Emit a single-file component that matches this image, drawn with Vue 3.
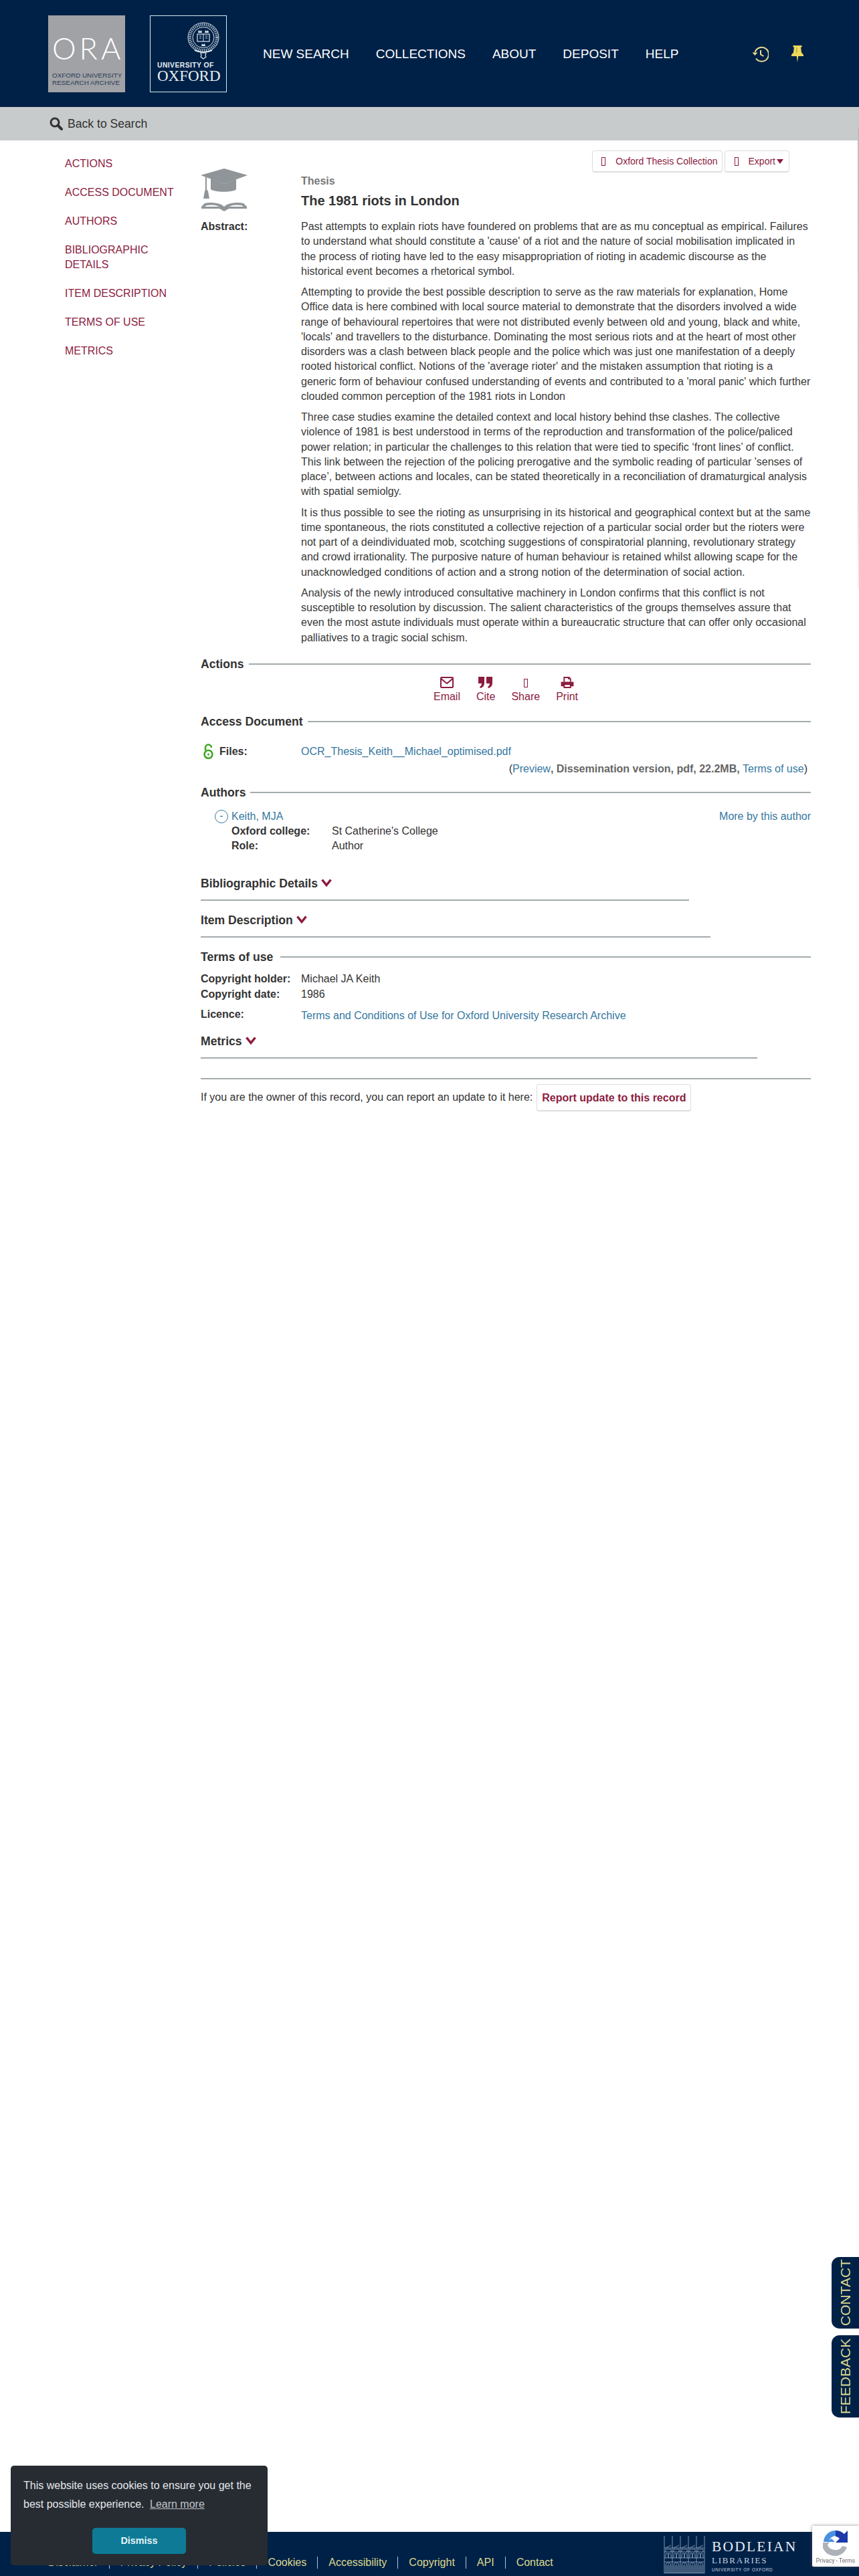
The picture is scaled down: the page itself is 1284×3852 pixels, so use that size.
<script setup>
const topLinks = ["NEW SEARCH", "COLLECTIONS", "ABOUT", "DEPOSIT", "HELP"];
const sideLinks = ["ACTIONS", "ACCESS DOCUMENT", "AUTHORS", "BIBLIOGRAPHIC DETAILS", "ITEM DESCRIPTION", "TERMS OF USE", "METRICS"];
const footerLinks = ["Disclaimer", "Privacy Policy", "Policies", "Cookies", "Accessibility", "Copyright", "API", "Contact"];

const paragraphs = [
  "Past attempts to explain riots have foundered on problems that are as mu conceptual as empirical. Failures to understand what should constitute a 'cause' of a riot and the nature of social mobilisation implicated in the process of rioting have led to the easy misappropriation of rioting in academic discourse as the historical event becomes a rhetorical symbol.",
  "Attempting to provide the best possible description to serve as the raw materials for explanation, Home Office data is here combined with local source material to demonstrate that the disorders involved a wide range of behavioural repertoires that were not distributed evenly between old and young, black and white, 'locals' and travellers to the disturbance. Dominating the most serious riots and at the heart of most other disorders was a clash between black people and the police which was just one manifestation of a deeply rooted historical conflict. Notions of the 'average rioter' and the mistaken assumption that rioting is a generic form of behaviour confused understanding of events and contributed to a 'moral panic' which further clouded common perception of the 1981 riots in London",
  "Three case studies examine the detailed context and local history behind thse clashes. The collective violence of 1981 is best understood in terms of the reproduction and transformation of the police/paliced power relation; in particular the challenges to this relation that were tied to specific ‘front lines’ of conflict. This link between the rejection of the policing prerogative and the symbolic reading of particular 'senses of place’, between actions and locales, can be stated theoretically in a reconciliation of dramaturgical analysis with spatial semiolgy.",
  "It is thus possible to see the rioting as unsurprising in its historical and geographical context but at the same time spontaneous, the riots constituted a collective rejection of a particular social order but the rioters were not part of a deindividuated mob, scotching suggestions of conspiratorial planning, revolutionary strategy and crowd irrationality. The purposive nature of human behaviour is retained whilst allowing scape for the unacknowledged conditions of action and a strong notion of the determination of social action.",
  "Analysis of the newly introduced consultative machinery in London confirms that this conflict is not susceptible to resolution by discussion. The salient characteristics of the groups themselves assure that even the most astute individuals must operate within a bureaucratic structure that can offer only occasional palliatives to a tragic social schism.",
];

// window bars for the Bodleian building
const bays = [0, 12, 24, 36, 48];
</script>

<template>
  <div class="page">
    <header class="top">
      <div class="logo ora">
        <div class="ora-big">ORA</div>
        <div class="ora-small">OXFORD UNIVERSITY<br />RESEARCH ARCHIVE</div>
      </div>
      <div class="logo oxford">
        <svg class="crest" viewBox="0 0 50 56" width="50" height="56" fill="none" stroke="#dfe8ee">
          <ellipse cx="25" cy="23" rx="23" ry="22" stroke-width="1" />
          <ellipse cx="25" cy="23" rx="16" ry="15.5" stroke-width="1" />
          <ellipse cx="25" cy="23" rx="20" ry="19" stroke-width="4" stroke-dasharray="1.4 1.4" opacity=".75" />
          <rect x="16" y="18" width="18" height="11" stroke-width="1.2" />
          <path d="M25 18v11M19 21h3M19 24h3M28 21h3M28 24h3" stroke-width="1" />
          <path d="M17 16l1-4 2 2 2-2 1 4zM27 16l1-4 2 2 2-2 1 4zM22 36l1-4 2 2 2-2 1 4z" fill="#dfe8ee" stroke="none" />
          <path d="M12 42c8 4 18 4 26 0" stroke-width="2" />
          <path d="M21 46h8l-1 4 1 2-4 3-4-3 1-2z" stroke-width="1.2" />
        </svg>
        <div class="ox-uni">UNIVERSITY OF</div>
        <div class="ox-name">OXFORD</div>
      </div>
      <nav class="top-nav">
        <a v-for="link in topLinks" :key="link">{{ link }}</a>
      </nav>
      <div class="top-icons">
        <svg width="25" height="24" viewBox="0 0 25 24" fill="none" stroke="#e8dc8f" stroke-width="2">
          <path d="M4.500 9A10.500 10.500 0 1 1 6 18.500" />
          <path d="M0.500 9.500h8l-4 4.500z" fill="#e8dc8f" stroke="none" />
          <path d="M13 6v6.500l4.500 2.500" />
        </svg>
        <svg width="18" height="25" viewBox="0 0 18 25" fill="#f0d95c">
          <path d="M2.500 0h13v2.500h-1.500l1 8 3 3.500v2H10.200L9 25l-1.200-9H0v-2l3-3.500 1-8H2.500z" />
          <path d="M7 3h1.500v8H7z" fill="#b9a94a" />
        </svg>
      </div>
    </header>

    <div class="back-bar">
      <svg width="20" height="20" viewBox="0 0 20 20" fill="none" stroke="#333">
        <circle cx="8" cy="8" r="6" stroke-width="3" />
        <path d="M12.500 12.500L18 18" stroke-width="4" stroke-linecap="round" />
      </svg>
      <span>Back to Search</span>
    </div>

    <main class="main">
      <aside class="side">
        <a v-for="link in sideLinks" :key="link">{{ link }}</a>
      </aside>

      <div class="record">
        <div class="tools">
          <a class="tool"><i class="tofu"></i>Oxford Thesis Collection</a>
          <a class="tool tool-export"><i class="tofu"></i>Export<span class="caret"></span></a>
        </div>

        <div class="row head-row">
          <svg class="thesis-icon" width="70" height="66" viewBox="0 0 70 66" fill="#8f9598">
            <path d="M35 0l35 10-35 13L0 10z" />
            <path d="M15 15l20 8 18-7v15c-4 5-32 5-38 0z" />
            <path d="M7 12h2v19l2 3 2 11H4l2-11 1-3z" />
            <path d="M1 57l5-5c8-2 18-1 25 2l4 3 4-3c7-3 17-4 25-2l5 5v3H42l-7 4-7-4H1zm8-2l-3 2h22c-6-3-13-3-19-2zm52 0c-6-1-13-1-19 2h22z" />
          </svg>
          <div>
            <div class="kind">Thesis</div>
            <h1 class="title">The 1981 riots in London</h1>
          </div>
        </div>

        <div class="row abstract">
          <b class="label">Abstract:</b>
          <div class="abstract-text">
            <p v-for="(text, i) in paragraphs" :key="i">{{ text }}</p>
          </div>
        </div>

        <h2 class="sec-head sec-actions">Actions</h2>
        <div class="actions">
          <a class="action">
            <svg width="20" height="17" viewBox="0 0 20 17" fill="none" stroke="#8c1c3e" stroke-width="2">
              <rect x="1" y="1" width="18" height="15" rx="1" />
              <path d="M1.500 3l8.500 7 8.500-7" />
            </svg>
            Email
          </a>
          <a class="action">
            <svg width="22" height="17" viewBox="0 0 22 17" fill="#8c1c3e">
              <path d="M0 0h9v9c0 4-2 7-6 8l-1-2c2-1 3-3 3-5H0zM12 0h9v9c0 4-2 7-6 8l-1-2c2-1 3-3 3-5h-5z" />
            </svg>
            Cite
          </a>
          <a class="action">
            <i class="tofu tofu-share"></i>
            Share
          </a>
          <a class="action">
            <svg width="20" height="17" viewBox="0 0 20 18" fill="#8c1c3e">
              <path d="M4 0h9l3 3v5h-2V4h-3V2H6v6H4z" />
              <path d="M1 8h18a1 1 0 0 1 1 1v6h-4v3H4v-3H0V9a1 1 0 0 1 1-1zm5 5v3h8v-3z" />
            </svg>
            Print
          </a>
        </div>

        <h2 class="sec-head sec-access">Access Document</h2>
        <div class="row files">
          <div class="files-label">
            <svg width="15" height="24" viewBox="0 0 15 24" fill="none" stroke="#3aa81e" stroke-width="2.500">
              <path d="M3 10V6a4.500 4.500 0 0 1 9 0" />
              <circle cx="7.500" cy="16" r="6" />
              <circle cx="7.500" cy="16" r="1.500" fill="#3aa81e" stroke="none" />
            </svg>
            <b>Files:</b>
          </div>
          <a class="link">OCR_Thesis_Keith__Michael_optimised.pdf</a>
        </div>
        <div class="file-meta">
          (<a class="link">Preview</a><b>, Dissemination version, pdf, 22.2MB, </b><a class="link">Terms of use</a>)
        </div>

        <h2 class="sec-head sec-authors">Authors</h2>
        <div class="author">
          <div class="author-line">
            <span class="minus">-</span>
            <a class="link">Keith, MJA</a>
            <a class="link more">More by this author</a>
          </div>
          <div class="author-info"><b>Oxford college:</b><span>St Catherine's College</span></div>
          <div class="author-info"><b>Role:</b><span>Author</span></div>
        </div>

        <div class="fold fold-biblio">
          <h2>Bibliographic Details <svg class="chev" width="16" height="12" viewBox="0 0 16 12" fill="none" stroke="#8c1c3e" stroke-width="3.500"><path d="M1.500 1.500L8 9.500l6.500-8" /></svg></h2>
        </div>
        <div class="fold fold-item">
          <h2>Item Description <svg class="chev" width="16" height="12" viewBox="0 0 16 12" fill="none" stroke="#8c1c3e" stroke-width="3.500"><path d="M1.500 1.500L8 9.500l6.500-8" /></svg></h2>
        </div>

        <h2 class="sec-head sec-terms">Terms of use</h2>
        <div class="row terms-row"><b class="label">Copyright holder:</b><span>Michael JA Keith</span></div>
        <div class="row terms-row"><b class="label">Copyright date:</b><span>1986</span></div>
        <div class="row terms-row licence"><b class="label">Licence:</b><a class="link">Terms and Conditions of Use for Oxford University Research Archive</a></div>

        <div class="fold fold-metrics">
          <h2>Metrics <svg class="chev" width="16" height="12" viewBox="0 0 16 12" fill="none" stroke="#8c1c3e" stroke-width="3.500"><path d="M1.500 1.500L8 9.500l6.500-8" /></svg></h2>
        </div>

        <div class="report">
          <span>If you are the owner of this record, you can report an update to it here:</span>
          <a class="report-btn">Report update to this record</a>
        </div>
      </div>
    </main>

    <footer class="foot">
      <div class="foot-links">
        <template v-for="(link, i) in footerLinks" :key="link">
          <span v-if="i" class="sep"></span>
          <a>{{ link }}</a>
        </template>
      </div>
      <div class="bod">
        <svg width="64" height="56" viewBox="0 0 64 56" fill="none" stroke="#9db3cc" stroke-width=".8">
          <path d="M1 0v56M13 0v56M25 0v56M37 0v56M49 0v56M61 0v56" />
          <path d="M1 18h60M1 24h60M1 33h60M1 39h60M1 55.500h60" />
          <g v-for="x in bays" :key="x">
            <path :d="`M${x + 3} 33v-5a2 2 0 0 1 4 0v5M${x + 7} 33v-5a2 2 0 0 1 4 0v5`" />
            <path :d="`M${x + 3} 24v-4h8v4M${x + 3} 18l8-4`" />
            <path :d="`M${x + 3} 55V44M${x + 5} 55V44M${x + 7} 55V42M${x + 9} 55V44M${x + 11} 55V44M${x + 3} 44a4 4 0 0 1 8 0`" />
          </g>
        </svg>
        <div class="bod-text">
          <div class="bod-1">BODLEIAN</div>
          <div class="bod-2">LIBRARIES</div>
          <div class="bod-3">UNIVERSITY OF OXFORD</div>
        </div>
      </div>
    </footer>

    <div class="edge"></div>
    <a class="tab tab-contact">CONTACT</a>
    <a class="tab tab-feedback">FEEDBACK</a>

    <div class="cookie">
      <p>This website uses cookies to ensure you get the best possible experience. <a>Learn more</a></p>
      <div class="dismiss">Dismiss</div>
    </div>

    <div class="captcha">
      <svg width="38" height="38" viewBox="0 0 38 38" fill="none" stroke-width="8">
        <path d="M5 17A14 14 0 0 1 19 4" stroke="#4a90e2" />
        <path d="M19 4a14 14 0 0 1 11 5" stroke="#1c3aa9" />
        <path d="M37 0v18H19l6-6c-2-2-4-3-6-3V0c4 0 8 2 12 6z" fill="#1c3aa9" stroke="none" />
        <path d="M0 18h10l-3 3c1 5 6 8 12 8v9C9 38 3 33 0 26z" fill="#adb1b8" stroke="none" />
        <path d="M19 29c5 0 8-2 10-6l7 2c-3 8-10 13-17 13z" fill="#adb1b8" stroke="none" />
        <path d="M6 17h12l-5-5" fill="#4a90e2" stroke="none" />
      </svg>
      <div class="captcha-text">Privacy - Terms</div>
    </div>
  </div>
</template>

<style>
html,
body {
  background: #fff;
}
</style>

<style scoped>
.page {
  min-height: 3852px;
  display: flex;
  flex-direction: column;
  font-family: "Liberation Sans", Arial, sans-serif;
  font-size: 16px;
  line-height: 22px;
  color: #333;
}

.top {
  height: 160px;
  background: #002147;
  display: flex;
  align-items: flex-start;
  padding: 23px 0 0 72px;
  box-sizing: border-box;
}
.logo {
  width: 115px;
  height: 115px;
  box-sizing: border-box;
  flex: none;
}
.ora {
  background: #a0a2a5;
  padding: 0 6px;
  margin-right: 37px;
}
.ora-big {
  font-family: Lato, "Liberation Sans", sans-serif;
  font-weight: 300;
  font-size: 45px;
  line-height: 46px;
  letter-spacing: 5px;
  color: #fff;
  margin-top: 26px;
  white-space: nowrap;
}
.ora-small {
  font-size: 9.900px;
  line-height: 10.500px;
  color: #2c3a57;
  margin-top: 13px;
  white-space: nowrap;
}
.oxford {
  border: 1px solid #cfeef0;
  padding: 9px 0 0 10px;
  position: relative;
  color: #e6edf2;
}
.crest {
  display: block;
  margin-left: 44px;
}
.ox-uni {
  font-size: 10.400px;
  font-weight: bold;
  line-height: 12px;
  letter-spacing: 0.4px;
  margin-top: 3px;
  white-space: nowrap;
}
.ox-name {
  font-family: "Liberation Serif", serif;
  font-size: 23px;
  line-height: 20px;
  white-space: nowrap;
}
.top-nav {
  display: flex;
  gap: 40px;
  margin-left: 54px;
  margin-top: 46px;
  font-size: 19px;
  line-height: 24px;
  color: #fff;
}
.top-nav a {
  white-space: nowrap;
}
.top-icons {
  display: flex;
  align-items: center;
  gap: 34px;
  margin-left: 110px;
  margin-top: 45px;
}

.back-bar {
  height: 50px;
  background: #c8cbcc;
  display: flex;
  align-items: center;
  padding-left: 74px;
  gap: 7px;
  font-size: 17.600px;
}

.main {
  display: flex;
}
.side {
  width: 203px;
  box-sizing: border-box;
  padding: 24px 30px 0 0;
  margin-left: 97px;
  display: flex;
  flex-direction: column;
  gap: 21px;
  color: #8c1c3e;
}
.record {
  width: 912px;
}
.tools {
  display: flex;
  justify-content: flex-end;
  gap: 3px;
  padding: 15px 32px 0 0;
}
.tool {
  display: flex;
  align-items: center;
  height: 33px;
  box-sizing: border-box;
  border: 1px solid #ddd;
  border-bottom-width: 2px;
  border-radius: 4px;
  padding: 0 6px 0 13px;
  font-size: 14px;
  color: #8c1c3e;
  white-space: nowrap;
}
.tool-export {
  padding: 0 8px 0 14px;
}
.tofu {
  display: inline-block;
  width: 6px;
  height: 13px;
  box-sizing: border-box;
  border: 1px solid #8c1c3e;
  margin-right: 15px;
}
.caret {
  border: 5px solid transparent;
  border-top: 7px solid #8c1c3e;
  border-bottom: 0;
  margin-left: 2px;
}
.row {
  display: grid;
  grid-template-columns: 150px 1fr;
}
.head-row {
  height: 70px;
}
.thesis-icon {
  margin-top: -6px;
}
.kind {
  margin-top: 2px;
  font-weight: bold;
  color: #777;
}
.title {
  margin: 5px 0 0;
  font-size: 20px;
  line-height: 26px;
  font-weight: bold;
  color: #333;
}
.label {
  font-weight: bold;
  white-space: nowrap;
}
.abstract {
  line-height: 22.250px;
}
.abstract-text {
  color: #3a3a3a;
}
.abstract p {
  margin: 0 0 9px;
}

.sec-head {
  display: flex;
  align-items: center;
  gap: 7px;
  margin: 0;
  font-size: 17.600px;
  line-height: 24px;
  font-weight: bold;
}
.sec-head::after {
  content: "";
  flex: 1;
  height: 2px;
  background: #a3abad;
}
.sec-actions {
  margin-top: 7px;
}
.actions {
  display: flex;
  justify-content: center;
  gap: 24px;
  margin-top: 7px;
  color: #8c1c3e;
}
.action {
  display: flex;
  flex-direction: column;
  align-items: center;
  height: 41px;
  justify-content: space-between;
}
.tofu-share {
  margin: 3px 0 0;
}
.sec-access {
  margin-top: 14px;
}
.files {
  margin-top: 21px;
  align-items: center;
}
.files-label {
  display: flex;
  align-items: center;
  gap: 9px;
  padding-left: 4px;
}
.link {
  color: #36789f;
}
.file-meta {
  text-align: right;
  padding-right: 5px;
  margin-top: 3px;
}
.file-meta b {
  color: #666;
}
.sec-authors {
  margin-top: 12px;
}
.author {
  margin: 13px 0 0 21px;
}
.author-line {
  display: flex;
  align-items: center;
  gap: 5px;
}
.minus {
  width: 20px;
  height: 20px;
  box-sizing: border-box;
  border: 1px solid #36789f;
  border-radius: 50%;
  color: #36789f;
  text-align: center;
  line-height: 16px;
}
.more {
  margin-left: auto;
}
.author-info {
  display: grid;
  grid-template-columns: 150px 1fr;
  padding-left: 25px;
}
.author-info b {
  white-space: nowrap;
}
.fold h2 {
  display: flex;
  align-items: center;
  gap: 5px;
  margin: 0;
  font-size: 17.600px;
  line-height: 24px;
  font-weight: bold;
  padding-bottom: 12px;
  border-bottom: 2px solid #a3abad;
}
.chev {
  margin-top: -2px;
}
.fold-biblio {
  margin-top: 33px;
  width: 730px;
}
.fold-item {
  margin-top: 17px;
  width: 762px;
}
.sec-terms {
  margin-top: 17px;
  gap: 11px;
}
.terms-row {
  margin-top: 1px;
}
.sec-terms + .terms-row {
  margin-top: 10px;
}
.licence {
  margin-top: 8px;
}
.licence .link {
  margin-top: 2px;
}
.fold-metrics {
  margin-top: 15px;
  width: 832px;
}
.report {
  display: flex;
  align-items: center;
  gap: 6px;
  margin-top: 29px;
  padding-top: 7px;
  border-top: 2px solid #a3abad;
}
.report-btn {
  height: 41px;
  box-sizing: border-box;
  border: 1px solid #ddd;
  border-bottom-width: 2px;
  border-radius: 4px;
  padding: 0 7px;
  line-height: 39px;
  font-weight: bold;
  color: #8c1c3e;
  white-space: nowrap;
}

.foot {
  margin-top: auto;
  height: 66px;
  background: #002147;
  position: relative;
  display: flex;
  box-sizing: border-box;
}
.foot-links {
  display: flex;
  align-items: center;
  gap: 16px;
  position: absolute;
  left: 72px;
  top: 35px;
  color: #dcd98e;
  white-space: nowrap;
}
.sep {
  width: 1px;
  height: 18px;
  background: #a9c6e8;
}
.bod {
  position: absolute;
  left: 992px;
  top: 6px;
  display: flex;
  gap: 8px;
  color: #e6edf2;
}
.bod-text {
  white-space: nowrap;
}
.bod-1 {
  font-family: "Liberation Serif", serif;
  font-size: 21.500px;
  line-height: 22px;
  letter-spacing: 2.200px;
  margin-top: 5px;
}
.bod-2 {
  font-family: "Liberation Serif", serif;
  font-size: 13px;
  line-height: 14px;
  letter-spacing: 1.800px;
  margin-top: 3px;
  color: #c5d3e2;
}
.bod-3 {
  font-size: 6.500px;
  line-height: 10px;
  letter-spacing: 0.600px;
  margin-top: 2px;
  color: #c5d3e2;
}

/* faint line down the window's right edge */
.edge {
  position: fixed;
  right: 0;
  top: 190px;
  width: 2px;
  height: 690px;
  background: linear-gradient(#bdbdbd, #cfcfcf 75%, #f4f4f4);
}

.tab {
  position: fixed;
  right: 0;
  width: 41px;
  box-sizing: border-box;
  background: #002147;
  color: #dcd98e;
  writing-mode: vertical-rl;
  transform: rotate(180deg);
  border-radius: 0 12px 12px 0;
  font-size: 21px;
  line-height: 41px;
  text-align: center;
}
.tab-contact {
  top: 3375px;
  height: 107px;
}
.tab-feedback {
  top: 3492px;
  height: 123px;
}

.cookie {
  position: fixed;
  left: 16px;
  top: 3687px;
  width: 384px;
  height: 149px;
  box-sizing: border-box;
  padding: 16px 19px;
  background: #272c33;
  border-radius: 5px;
  color: #e3e6ea;
  font-family: "Liberation Sans", Helvetica, sans-serif;
  font-size: 16px;
  line-height: 28px;
}
.cookie p {
  margin: 0;
}
.cookie a {
  margin-left: 4px;
  text-decoration: underline;
  opacity: 0.8;
}
.dismiss {
  width: 140px;
  height: 39px;
  margin: 21px auto 0;
  background: #0e7a96;
  border-radius: 5px;
  text-align: center;
  font-size: 14.400px;
  font-weight: bold;
  line-height: 38px;
  color: #e6f4f7;
}

.captcha {
  position: fixed;
  left: 1214px;
  top: 3777px;
  width: 70px;
  height: 61px;
  background: #fff;
  border-radius: 2px 0 0 2px;
  box-shadow: 0 0 5px rgba(100, 100, 100, 0.7);
  display: flex;
  flex-direction: column;
  align-items: center;
}
.captcha svg {
  margin-top: 7px;
}
.captcha-text {
  font-family: Roboto, sans-serif;
  font-size: 8.600px;
  line-height: 10px;
  color: #666;
  white-space: nowrap;
  margin-top: 2px;
}
</style>
